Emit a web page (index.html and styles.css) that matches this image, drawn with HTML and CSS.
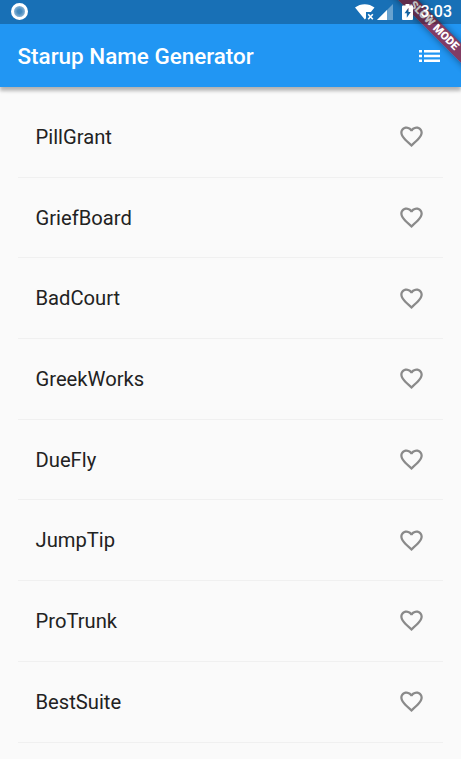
FILE: index.html
```
<!DOCTYPE html>
<html lang="en">
<head>
<meta charset="utf-8">
<title>Starup Name Generator</title>
<link rel="stylesheet" href="styles.css">
</head>
<body>
<svg class="defs" aria-hidden="true"><symbol id="heart" viewBox="0 0 24 24"><path d="M16.5 3c-1.74 0-3.41.81-4.5 2.09C10.91 3.81 9.24 3 7.5 3 4.42 3 2 5.42 2 8.5c0 3.78 3.4 6.86 8.55 11.54L12 21.35l1.45-1.32C18.6 15.36 22 12.28 22 8.5 22 5.42 19.58 3 16.5 3zm-4.4 15.55l-.1.1-.1-.1C7.14 14.24 4 11.39 4 8.5 4 6.5 5.5 5 7.5 5c1.54 0 3.04.99 3.57 2.36h1.87C13.46 5.99 14.96 5 16.5 5c2 0 3.5 1.5 3.5 3.5 0 2.89-3.14 5.74-7.9 10.05z"/></symbol></svg>
<header class="header">
  <div class="corner"><div class="ribbon"><span>SLOW MODE</span></div></div>
  <div class="status">
    <span class="dot"></span>
    <span class="status-right">
      <svg class="wifi" width="20" height="16" viewBox="0 0 20 16"><path d="M0 3.5C5.5-1 14-1 19.5 3.5L15.9 8H11v6.2L9.8 15.6z"/><path class="cross" d="M13.2 10.2l4.6 5M17.8 10.2l-4.600 5"/></svg>
      <svg class="signal" width="16" height="16" viewBox="0 0 16 16"><path class="faint" d="M16 0v16H0z"/><path d="M10 6v10H0z"/></svg>
      <svg class="battery" width="11" height="16" viewBox="0 0 11 16"><path fill-rule="evenodd" d="M3.5 0h4v1.5H10q1 0 1 1V15q0 1-1 1H1q-1 0-1-1V2.500q0-1 1-1h2.500zM6.500 3.800L2.500 9.300h2.300v4.400l4-5.700H6.500z"/></svg>
      <span class="time">3:03</span>
    </span>
  </div>
  <div class="toolbar">
    <h1>Starup Name Generator</h1>
    <svg class="list-icon" viewBox="0 0 21 12"><path d="M0 0h3v2.400H0zM5 0h16v2.400H5zM0 4.800h3v2.400H0zM5 4.800h16v2.400H5zM0 9.600h3V12H0zM5 9.600h16V12H5z"/></svg>
  </div>
</header>
<ul class="names">
  <li><span>PillGrant</span><svg><use href="#heart"/></svg></li>
  <li><span>GriefBoard</span><svg><use href="#heart"/></svg></li>
  <li><span>BadCourt</span><svg><use href="#heart"/></svg></li>
  <li><span>GreekWorks</span><svg><use href="#heart"/></svg></li>
  <li><span>DueFly</span><svg><use href="#heart"/></svg></li>
  <li><span>JumpTip</span><svg><use href="#heart"/></svg></li>
  <li><span>ProTrunk</span><svg><use href="#heart"/></svg></li>
  <li><span>BestSuite</span><svg><use href="#heart"/></svg></li>
</ul>
</body>
</html>
```
FILE: styles.css
```
* { box-sizing: border-box; }
body {
  margin: 0;
  height: 759px;
  overflow: hidden;
  background: #fafafa;
  font-family: Roboto, sans-serif;
}
.defs { position: absolute; width: 0; height: 0; }
.header {
  position: relative;
  height: 87px;
  background: #2196f3;
  box-shadow: 0 4px 3px rgba(0, 0, 0, .2), 0 1px 7px rgba(0, 0, 0, .18);
}
.corner {
  position: absolute;
  top: 0;
  right: 0;
  width: 87px;
  height: 87px;
  overflow: hidden;
}
.ribbon {
  position: absolute;
  left: -10px;
  top: 18.5px;
  width: 140px;
  height: 13.5px;
  transform: rotate(45deg);
  background: rgba(176, 18, 32, .68);
  box-shadow: 0 0 7px rgba(0, 0, 0, .45);
  color: #fff;
  font-size: 11.2px;
  font-weight: 900;
  line-height: 13.5px;
  text-align: center;
  white-space: nowrap;
}
.status {
  position: relative;
  display: flex;
  align-items: center;
  justify-content: space-between;
  height: 24px;
  padding: 0 9px 0 11px;
  background: rgba(0, 0, 0, .25);
}
.dot {
  width: 17px;
  height: 17px;
  margin-top: -2px;
  border: 3px solid #fff;
  border-radius: 50%;
  background: radial-gradient(circle, #4288bd 25%, #7eadd2 65%);
}
.status-right { display: flex; align-items: center; }
.status svg { fill: #fff; margin-top: -1px; }
.wifi .cross { stroke: #fff; stroke-width: 1.6; }
.signal { margin-left: 2px; }
.signal .faint { opacity: .35; }
.battery { margin-left: 9px; }
.time {
  margin-left: 8px;
  color: #fff;
  font-size: 16px;
  font-weight: 500;
  line-height: 24px;
}
.toolbar {
  display: flex;
  align-items: center;
  justify-content: space-between;
  height: 63px;
  padding: 0 21px 0 17.5px;
}
h1 {
  margin: 0;
  color: #fff;
  font-size: 22.45px;
  font-weight: 500;
  line-height: 28px;
}
.list-icon { width: 21px; height: 12px; fill: #fff; }
.names { margin: 0; padding: 10px 18px 0 17.5px; list-style: none; }
.names li {
  display: flex;
  align-items: center;
  justify-content: space-between;
  height: 80.7px;
  padding: 0 18px;
  border-bottom: 1px solid #f0f0f0;
  color: #222;
  font-size: 20.2px;
}
.names svg { width: 27px; height: 27px; fill: #8a8a8a; }
```
